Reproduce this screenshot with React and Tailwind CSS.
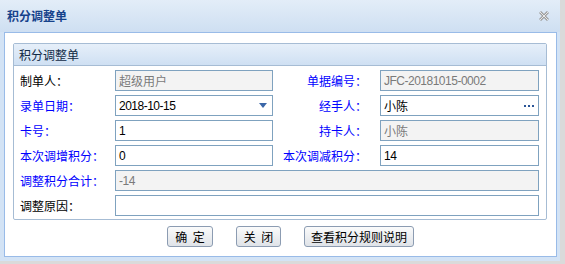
const cjk = "font-['Noto_Sans_CJK_SC',sans-serif]";
const num = "font-['Liberation_Sans','Noto_Sans_CJK_SC',sans-serif]";

function Field({ value, disabled, width, children, latin }) {
  return (
    <div
      className={`h-[21px] border border-[#7fa2bf] flex items-center pl-[3px] pr-[5px] justify-between text-[12px] ${
        disabled ? "bg-[#f3f3f3] text-[#7a7a7a]" : "bg-white text-black"
      } ${latin ? `${num} tracking-[-0.5px]` : cjk}`}
      style={{ width }}
    >
      <span className="leading-none">{value}</span>
      {children}
    </div>
  );
}

function Label({ text, blue, right }) {
  return (
    <div
      className={`${cjk} text-[12px] ${blue ? "text-[#0000ff]" : "text-black"} ${
        right ? "w-[107px] text-right pr-[13px]" : "w-[101px] pl-[6px]"
      }`}
    >
      {text}
    </div>
  );
}

function Btn({ text, w }) {
  return (
    <button
      className={`${cjk} h-[21px] text-[12px] text-black border border-[#8c9cb2] rounded-[3px] bg-linear-to-b from-[#fbfbfb] to-[#dfe3e8] leading-none whitespace-pre`}
      style={{ width: w }}
    >
      {text}
    </button>
  );
}

export default function App() {
  return (
    <div className="w-[565px] h-[264px] bg-[#dadada]">
      <div className="w-[560px] h-[261px] bg-[#d3e3f5] flex flex-col">
        <div className="h-[32px] flex items-center justify-between pl-[7px] pr-[11px] bg-linear-to-b from-[#e3edf8] to-[#cedff2]">
          <span className={`${cjk} text-[12px] font-bold text-[#15428b]`}>积分调整单</span>
          <svg width="10" height="10" viewBox="0 0 10 10">
            <path d="M1 1 L9 9 M9 1 L1 9" stroke="#a0a0a0" strokeWidth="3" />
            <path d="M1 1 L9 9 M9 1 L1 9" stroke="#e8e8e8" strokeWidth="1" />
          </svg>
        </div>
        <div className="ml-[4px] mr-[3px] h-[225px] border border-[#99bbe8] bg-white pt-[10px] pl-[8px]">
          <div className="w-[534px] border border-[#a6bcd4] rounded-[2px]">
            <div className="h-[22px] flex items-center pl-[5px] border-b border-[#a6bcd4] bg-linear-to-b from-[#e6eff9] to-[#cfe0f3]">
              <span className={`${cjk} text-[12px] text-[#102a45]`}>积分调整单</span>
            </div>
            <div className="pt-[4px] pb-[3px] flex flex-col gap-[4px]">
              <div className="flex items-center">
                <Label text="制单人：" />
                <Field value="超级用户" disabled width="158px" />
                <Label text="单据编号：" blue right />
                <Field value="JFC-20181015-0002" disabled latin width="159px" />
              </div>
              <div className="flex items-center">
                <Label text="录单日期：" blue />
                <Field value="2018-10-15" latin width="158px">
                  <svg width="8" height="5" viewBox="0 0 8 5">
                    <path d="M0 0 H8 L4 5 Z" fill="#3b67a8" />
                  </svg>
                </Field>
                <Label text="经手人：" blue right />
                <Field value="小陈" width="159px">
                  <svg width="10" height="2" viewBox="0 0 10 2" className="mr-[-1px]">
                    <rect x="0" y="0" width="2" height="2" fill="#2a5597" />
                    <rect x="4" y="0" width="2" height="2" fill="#2a5597" />
                    <rect x="8" y="0" width="2" height="2" fill="#2a5597" />
                  </svg>
                </Field>
              </div>
              <div className="flex items-center">
                <Label text="卡号：" blue />
                <Field value="1" latin width="158px" />
                <Label text="持卡人：" blue right />
                <Field value="小陈" disabled width="159px" />
              </div>
              <div className="flex items-center">
                <Label text="本次调增积分：" blue />
                <Field value="0" latin width="158px" />
                <Label text="本次调减积分：" blue right />
                <Field value="14" latin width="159px" />
              </div>
              <div className="flex items-center">
                <Label text="调整积分合计：" blue />
                <Field value="-14" disabled latin width="424px" />
              </div>
              <div className="flex items-center">
                <Label text="调整原因：" />
                <Field value="" width="424px" />
              </div>
            </div>
          </div>
          <div className="flex gap-[23px] pl-[154px] mt-[6px]">
            <Btn text="确  定" w="46px" />
            <Btn text="关  闭" w="45px" />
            <Btn text="查看积分规则说明" w="110px" />
          </div>
        </div>
      </div>
    </div>
  );
}
